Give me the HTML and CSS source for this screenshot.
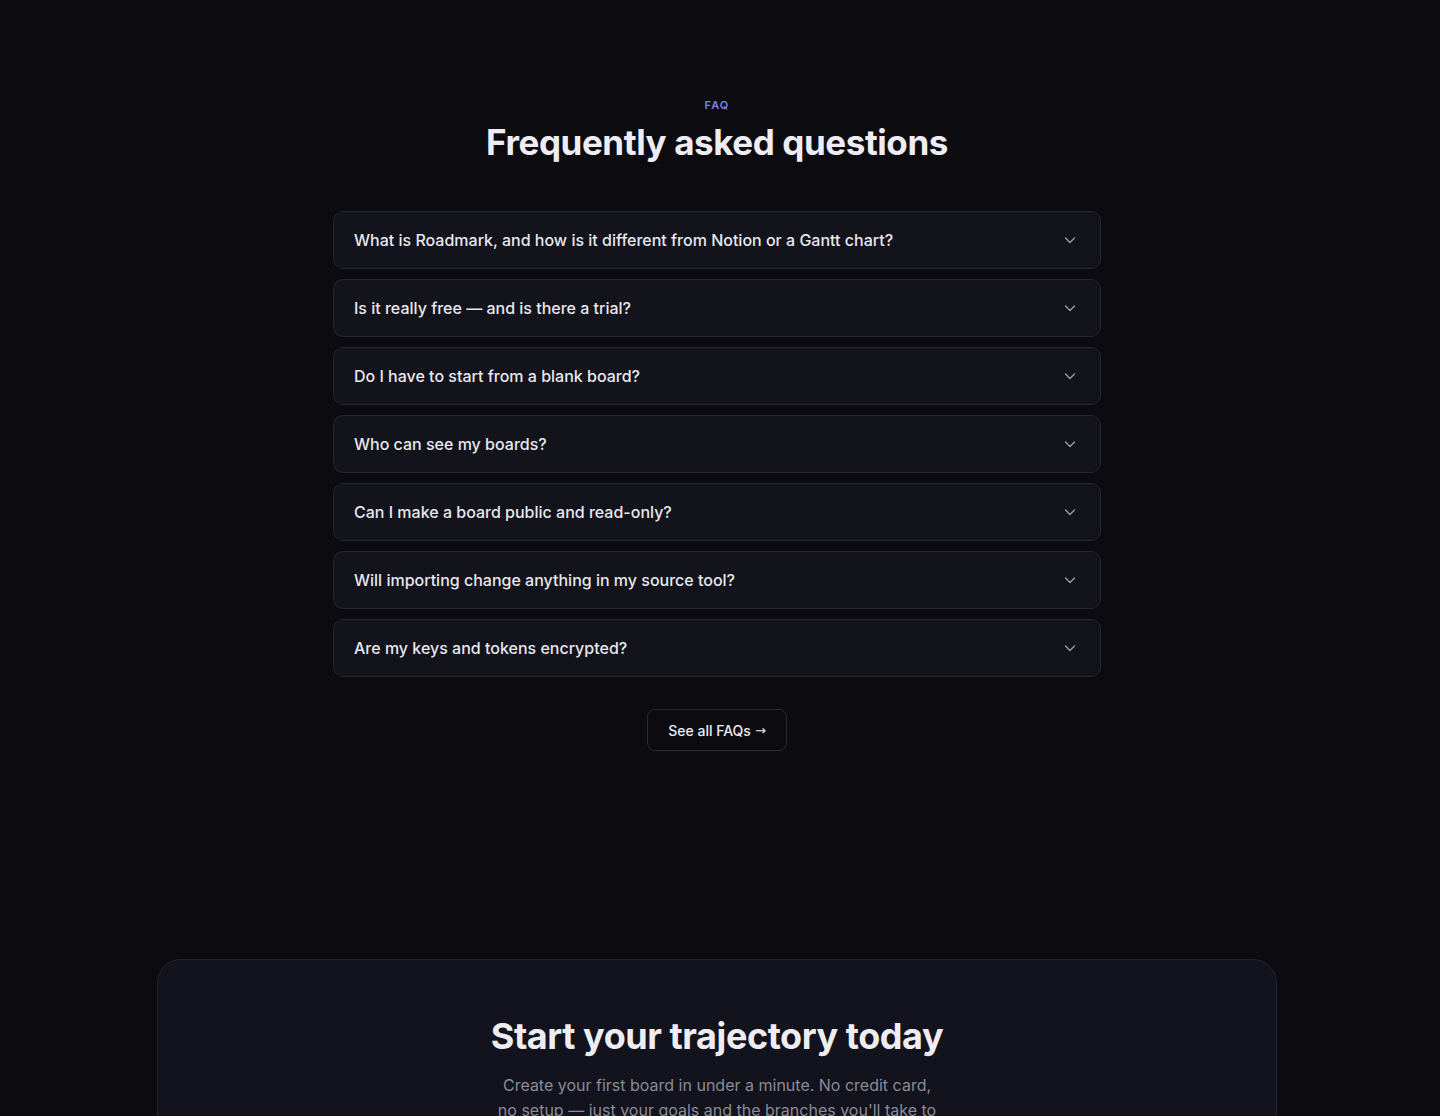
FILE: index.html
```html
<!DOCTYPE html>
<html lang="en">
<head>
<meta charset="utf-8">
<title>FAQ</title>
<link rel="stylesheet" href="styles.css">
</head>
<body>
<section class="faq">
  <p class="eyebrow">FAQ</p>
  <h2 class="faq-title">Frequently asked questions</h2>
  <div class="faq-list">
    <div class="faq-item"><span>What is Roadmark, and how is it different from Notion or a Gantt chart?</span><svg class="chev" viewBox="0 0 16 16"><path d="M3.5 6l4.5 4.5L12.5 6"/></svg></div>
    <div class="faq-item"><span>Is it really free — and is there a trial?</span><svg class="chev" viewBox="0 0 16 16"><path d="M3.5 6l4.5 4.5L12.5 6"/></svg></div>
    <div class="faq-item"><span>Do I have to start from a blank board?</span><svg class="chev" viewBox="0 0 16 16"><path d="M3.5 6l4.5 4.5L12.5 6"/></svg></div>
    <div class="faq-item"><span>Who can see my boards?</span><svg class="chev" viewBox="0 0 16 16"><path d="M3.5 6l4.5 4.5L12.5 6"/></svg></div>
    <div class="faq-item"><span>Can I make a board public and read-only?</span><svg class="chev" viewBox="0 0 16 16"><path d="M3.5 6l4.5 4.5L12.5 6"/></svg></div>
    <div class="faq-item"><span>Will importing change anything in my source tool?</span><svg class="chev" viewBox="0 0 16 16"><path d="M3.5 6l4.5 4.5L12.5 6"/></svg></div>
    <div class="faq-item"><span>Are my keys and tokens encrypted?</span><svg class="chev" viewBox="0 0 16 16"><path d="M3.5 6l4.5 4.5L12.5 6"/></svg></div>
  </div>
  <a class="see-all" href="#">See all FAQs <span class="arrow">→</span></a>
</section>
<section class="cta">
  <div class="cta-card">
    <h2 class="cta-title">Start your trajectory today</h2>
    <p class="cta-text">Create your first board in under a minute. No credit card, no setup — just your goals and the branches you'll take to reach them.</p>
  </div>
</section>
</body>
</html>
```
FILE: styles.css
```css
* { box-sizing: border-box; }
html, body { margin: 0; padding: 0; }
body {
  background: #0b0b10;
  color: #ececf1;
  font-family: Inter, "Liberation Sans", sans-serif;
  height: 1116px;
  overflow: hidden;
  padding-right: 6px;
}
.faq {
  display: flex;
  flex-direction: column;
  align-items: center;
  padding-top: 98px;
}
.eyebrow {
  margin: 0;
  font-size: 11px;
  font-weight: 600;
  letter-spacing: 0.1em;
  color: #7c83e6;
  line-height: 14px;
}
.faq-title {
  margin: 8px 0 0;
  font-size: 35px;
  font-weight: 700;
  letter-spacing: -0.012em;
  line-height: 44px;
  color: #ededf3;
}
.faq-list {
  margin-top: 47px;
  width: 768px;
  display: flex;
  flex-direction: column;
  gap: 10px;
}
.faq-item {
  height: 58px;
  display: flex;
  align-items: center;
  justify-content: space-between;
  padding: 0 22px 0 20px;
  background: #12131b;
  border: 1px solid #262731;
  border-radius: 10px;
  font-size: 16px;
  font-weight: 500;
  color: #e8e8ee;
}
.chev {
  width: 16px;
  height: 16px;
  fill: none;
  stroke: #9a9ba6;
  stroke-width: 1.4;
  stroke-linecap: round;
  stroke-linejoin: round;
}
.see-all {
  margin-top: 32px;
  width: 140px;
  height: 42px;
  display: flex;
  align-items: center;
  justify-content: center;
  gap: 4px;
  border: 1px solid #2a2b34;
  border-radius: 8px;
  background: #0b0b10;
  color: #ececf1;
  font-size: 14px;
  font-weight: 500;
  text-decoration: none;
}
.arrow {
  font-family: "DejaVu Sans", sans-serif;
  font-size: 13px;
}
.cta {
  display: flex;
  justify-content: center;
  margin-top: 208px;
}
.cta-card {
  width: 1120px;
  height: 300px;
  border: 1px solid #23233a;
  border-radius: 24px;
  background: #12131c;
  display: flex;
  flex-direction: column;
  align-items: center;
  padding-top: 54px;
}
.cta-title {
  margin: 0;
  font-size: 36px;
  font-weight: 700;
  letter-spacing: -0.012em;
  line-height: 44px;
  color: #ededf3;
}
.cta-text {
  margin: 15px 0 0;
  width: 450px;
  text-align: center;
  font-size: 16px;
  line-height: 25px;
  color: #8a8b97;
}
```
